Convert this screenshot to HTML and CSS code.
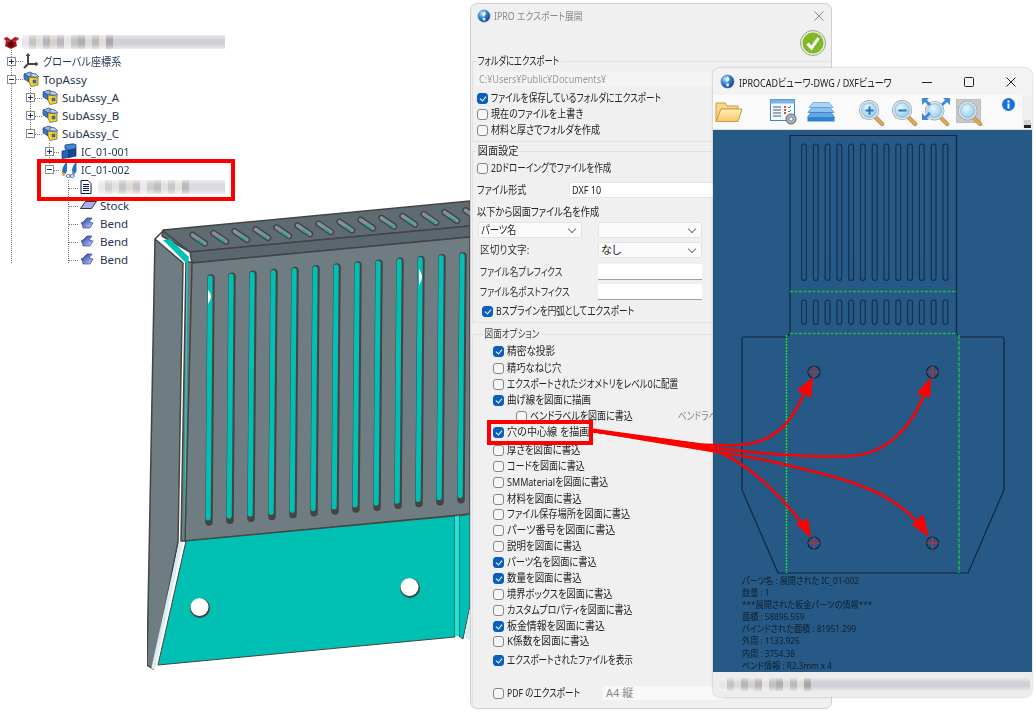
FILE: index.html
```html
<!DOCTYPE html>
<html lang="ja">
<head>
  <meta charset="UTF-8">
  <title>IPRO エクスポート展開</title>
  <link rel="stylesheet" href="styles.css">
</head>
<body>
<svg class="defs" width="0" height="0">
  <defs>
    <radialGradient id="globe" cx="35%" cy="30%" r="75%">
      <stop offset="0" stop-color="#bfe3ff"/><stop offset=".5" stop-color="#2f7fd0"/><stop offset="1" stop-color="#123f86"/>
    </radialGradient>
    <radialGradient id="lens" cx="40%" cy="35%" r="70%">
      <stop offset="0" stop-color="#e6f6ff"/><stop offset="1" stop-color="#8fcbee"/>
    </radialGradient>
    <linearGradient id="bendfill" x1="0" y1="0" x2="1" y2="1">
      <stop offset="0" stop-color="#16309c"/><stop offset="1" stop-color="#c9d4f7"/>
    </linearGradient>
    <linearGradient id="folderfill" x1="0" y1="0" x2="0" y2="1">
      <stop offset="0" stop-color="#fff0bd"/><stop offset="1" stop-color="#f6c865"/>
    </linearGradient>
    <symbol id="i-globe" viewBox="0 0 16 16">
      <circle cx="8" cy="8" r="7" fill="url(#globe)" stroke="#5b7fa8" stroke-width=".6"/>
      <path d="M8 2.500c2 1.200 2.500 2.800 1.600 4.200L7.200 8.800 6 6.200z" fill="#e9f5ff"/>
      <path d="M6 10.500l3-.8.8 3-2.400.8z" fill="#d5ecff"/>
    </symbol>
    <symbol id="i-assy" viewBox="0 0 17 16">
      <path d="M1 3l6-2 5 3-6 2z" fill="#8fb7e6" stroke="#274a7a" stroke-width=".7"/>
      <path d="M1 3l5 3v5L1 8z" fill="#3b78c4" stroke="#274a7a" stroke-width=".7"/>
      <path d="M6 6l9 1v7l-7 1.500L6 11z" fill="#f6d32d" stroke="#5d5a24" stroke-width=".7"/>
      <path d="M8 2l5 1 3 3-8 0z" fill="#bcd2ec" stroke="#274a7a" stroke-width=".7"/>
      <path d="M10 9h3v3h-3z" fill="#3b78c4" stroke="#274a7a" stroke-width=".5"/>
    </symbol>
    <symbol id="i-part" viewBox="0 0 16 16">
      <path d="M1 8l7-1v7.500L1 15.500z" fill="#1f66c4" stroke="#0f2d5e" stroke-width=".7"/>
      <path d="M8 7l7-1.500V13l-7 1.500z" fill="#164a96" stroke="#0f2d5e" stroke-width=".7"/>
      <path d="M4 2l8-1.200 3 1v3.700L8 7 4 6z" fill="#3f8ad8" stroke="#0f2d5e" stroke-width=".7"/>
    </symbol>
    <symbol id="i-sheet" viewBox="0 0 18 17">
      <path d="M1 11C1 7 3 3 6 .5V10L4.500 13z" fill="#2b6fc0"/>
      <path d="M1 11l3.500 2L3 15.500 1 14z" fill="#f0a31e"/>
      <path d="M11 10c0-4 2-7 4.500-9.500V10L14 13z" fill="#2b6fc0"/>
      <path d="M11 10l3 3-1.500 1.500-1.500-2z" fill="#8a8f99"/>
      <ellipse cx="7.500" cy="15" rx="2.400" ry="1.400" fill="none" stroke="#3f74c4" stroke-width=".9"/>
      <ellipse cx="11" cy="15" rx="2.400" ry="1.400" fill="none" stroke="#3f74c4" stroke-width=".9"/>
    </symbol>
    <symbol id="i-doc" viewBox="0 0 12 14">
      <path d="M1 .5h7l3 3v10H1z" fill="#fff" stroke="#0a1560"/>
      <path d="M3 4.500h6M3 6.500h6M3 8.500h6M3 10.500h6" stroke="#0a1560"/>
    </symbol>
    <symbol id="i-bend" viewBox="0 0 14 12">
      <path d="M1 6l2-1 4-4h5l-3 4 4 1-3 5H3C3 9 2 7 1 6z" fill="url(#bendfill)" stroke="#18308e" stroke-width=".6"/>
    </symbol>
    <symbol id="i-mag" viewBox="0 0 28 28">
      <path d="M17 18l8 8" stroke="#8c8c8c" stroke-width="4.400" stroke-linecap="round"/>
      <path d="M17 18l8 8" stroke="#f2a33a" stroke-width="3" stroke-linecap="round"/>
      <circle cx="11.500" cy="11.500" r="10.500" fill="#8f9ea9"/>
      <circle cx="11.500" cy="11.500" r="9.800" fill="#dbe4ea"/>
      <circle cx="11.500" cy="11.500" r="7.600" fill="url(#lens)" stroke="#7fa2ba" stroke-width=".6"/>
    </symbol>
    <g id="sheet-long"><rect x="801.600" y="144" width="4.800" height="136.500" rx="2.400" fill="none" stroke="#14304d" stroke-width="1.200"/></g>
    <g id="sheet-short"><rect x="801.600" y="300" width="4.800" height="24.500" rx="2.400" fill="none" stroke="#14304d" stroke-width="1.200"/></g>
  </defs>
</svg>

<div class="desk">

  <!-- MODEL TREE -->
  <section class="tree">
    <svg class="tree-guides" width="240" height="270">
      <path d="M11.500 50V263M30.500 88V135M49.500 143V170M68.500 180V263M16 61.500H23M16 79.500H23M35 98.500H42M35 116.500H42M35 134.500H42M54 152.500H60M54 170.500H60M69 188.500H79M69 206.500H79M69 224.500H79M69 242.500H79M69 260.500H79" stroke="#777" stroke-dasharray="1 1" fill="none"/>
    </svg>
    <div class="tree-row root">
      <svg class="tree-icon" width="17" height="15" viewBox="0 0 17 15"><path d="M1 3l3-1 4 3 4-3 4 1-3 3 1 5-6 3-6-3 1-5z" fill="#a8141c"/><path d="M5 7l3-1.500L11 7v4l-3 1.500L5 11z" fill="#5c0a10"/><path d="M1 4l6 3M16 4l-6 3" stroke="#f03a3a"/></svg>
      <span class="mosaic mosaic-root"></span>
    </div>
    <div class="tree-row d0"><span class="exp plus"></span><svg class="tree-icon" width="16" height="16" viewBox="0 0 16 16"><path d="M5 1v10h9M5 11l-4 4" fill="none" stroke="#444" stroke-width="2"/><path d="M5 0l2.500 3h-5zM15.500 11l-3 2.500v-5z" fill="#444"/></svg><span class="tree-label s88">グローバル座標系</span></div>
    <div class="tree-row d0"><span class="exp minus"></span><svg class="tree-icon" width="17" height="16"><use href="#i-assy"/></svg><span class="tree-label">TopAssy</span></div>
    <div class="tree-row d1"><span class="exp plus"></span><svg class="tree-icon" width="17" height="16"><use href="#i-assy"/></svg><span class="tree-label">SubAssy_A</span></div>
    <div class="tree-row d1"><span class="exp plus"></span><svg class="tree-icon" width="17" height="16"><use href="#i-assy"/></svg><span class="tree-label">SubAssy_B</span></div>
    <div class="tree-row d1"><span class="exp minus"></span><svg class="tree-icon" width="17" height="16"><use href="#i-assy"/></svg><span class="tree-label">SubAssy_C</span></div>
    <div class="tree-row d2"><span class="exp plus"></span><svg class="tree-icon" width="16" height="16"><use href="#i-part"/></svg><span class="tree-label s92">IC_01-001</span></div>
    <div class="tree-row d2"><span class="exp minus"></span><svg class="tree-icon" width="18" height="17"><use href="#i-sheet"/></svg><span class="tree-label s92">IC_01-002</span></div>
    <div class="tree-row d3"><span class="exp none"></span><svg class="tree-icon" width="12" height="14"><use href="#i-doc"/></svg><span class="mosaic mosaic-doc"></span></div>
    <div class="tree-row d3"><span class="exp none"></span><svg class="tree-icon" width="17" height="8" viewBox="0 0 17 8"><path d="M.5 7.500l5-7H16.500l-5 7z" fill="#a9b0ee" stroke="#333"/></svg><span class="tree-label">Stock</span></div>
    <div class="tree-row d3"><span class="exp none"></span><svg class="tree-icon" width="14" height="12"><use href="#i-bend"/></svg><span class="tree-label">Bend</span></div>
    <div class="tree-row d3"><span class="exp none"></span><svg class="tree-icon" width="14" height="12"><use href="#i-bend"/></svg><span class="tree-label">Bend</span></div>
    <div class="tree-row d3"><span class="exp none"></span><svg class="tree-icon" width="14" height="12"><use href="#i-bend"/></svg><span class="tree-label">Bend</span></div>
  </section>

  <!-- 3D PART -->
  <svg class="part" width="323" height="480" viewBox="147 195 323 480">
    <defs>
      <g id="topslot">
        <path d="M192.500 235L205 243.500" stroke="#444" stroke-width="6.500" stroke-linecap="round"/>
        <path d="M192.500 235L205 243.500" stroke="#84919a" stroke-width="3.600" stroke-linecap="round"/>
        <path d="M197 239.500L204 244" stroke="#19a79c" stroke-width="1.500"/>
      </g>
      <g id="longslot">
        <path d="M211 278L209 522" stroke="#444" stroke-width="7.500" stroke-linecap="round"/>
        <path d="M210.200 278L208.200 518" stroke="#00bfb3" stroke-width="5" stroke-linecap="round"/>
      </g>
    </defs>
    <!-- top flange -->
    <path d="M163 230L470 201V226L190 252L162 236Z" fill="#5e6b72" stroke="#444" stroke-width="1.500" stroke-linejoin="round"/>
    <path d="M190 252L470 226V237L192 263Z" fill="#5a676e" stroke="#444" stroke-width="1.500"/>
    <use href="#topslot"/><use href="#topslot" transform="translate(21 -1.900)"/><use href="#topslot" transform="translate(42 -3.800)"/><use href="#topslot" transform="translate(63 -5.700)"/><use href="#topslot" transform="translate(84 -7.600)"/><use href="#topslot" transform="translate(105 -9.500)"/><use href="#topslot" transform="translate(126 -11.400)"/><use href="#topslot" transform="translate(147 -13.300)"/><use href="#topslot" transform="translate(168 -15.200)"/><use href="#topslot" transform="translate(189 -17.100)"/><use href="#topslot" transform="translate(210 -19)"/><use href="#topslot" transform="translate(231 -20.900)"/><use href="#topslot" transform="translate(252 -22.800)"/><use href="#topslot" transform="translate(273 -24.700)"/>
    <!-- teal under the flange, left panel -->
    <path d="M186 262H193L186 541H181Z" fill="#6f7c82" stroke="#444" stroke-width="1.500"/>
    <path d="M187 262L185 540" stroke="#14d8c8" stroke-width="1.200"/>
    <path d="M155 239L183 263L178 542L153 669L147 665Z" fill="#6f7c82" stroke="#444" stroke-width="1.500" stroke-linejoin="round"/>
    <path d="M163 240L170 239L189 257L188 265Z" fill="#00bfb3"/>
    <path d="M155 239L163 231L190 252" fill="none" stroke="#444" stroke-width="1.500"/>
    <!-- front face -->
    <path d="M192 263L470 237V514L185 541Z" fill="#6f7c82" stroke="#444" stroke-width="1.500"/>
    <use href="#longslot"/><use href="#longslot" transform="translate(21 -1.850)"/><use href="#longslot" transform="translate(42 -3.700)"/><use href="#longslot" transform="translate(63 -5.550)"/><use href="#longslot" transform="translate(84 -7.400)"/><use href="#longslot" transform="translate(105 -9.250)"/><use href="#longslot" transform="translate(126 -11.100)"/><use href="#longslot" transform="translate(147 -12.950)"/><use href="#longslot" transform="translate(168 -14.800)"/><use href="#longslot" transform="translate(189 -16.650)"/><use href="#longslot" transform="translate(210 -18.500)"/><use href="#longslot" transform="translate(231 -20.350)"/><use href="#longslot" transform="translate(252 -22.200)"/>
    <path d="M208 290Q214 296 208 304Z" fill="#fff"/><path d="M419 269Q425 277 419 285Z" fill="#fff"/>
    <!-- lower teal panel -->
    <path d="M186 541L455 516V637L158 665Z" fill="#00bfb3" stroke="#444" stroke-width="1"/>
    <path d="M181 542L153 669" stroke="#dbecf2" stroke-width="3.500"/>
    <path d="M459 516L470 514V606L463 639L459 636Z" fill="#00bfb3" stroke="#444" stroke-width="1"/>
    <path d="M457 516V636" stroke="#1ee6d4" stroke-width="4"/>
    <path d="M470 608L464 638L470 640Z" fill="#dbecf2"/>
    <circle cx="200" cy="608" r="10" fill="#444"/><circle cx="199.500" cy="607" r="9" fill="#fff"/>
    <circle cx="410" cy="588" r="10" fill="#444"/><circle cx="409.500" cy="587" r="9" fill="#fff"/>
  </svg>

  <!-- EXPORT DIALOG -->
  <section class="dialog">
    <header class="dialog-title">
      <svg class="app-icon" width="14" height="14"><use href="#i-globe"/></svg>
      <span class="dialog-name s84">IPRO エクスポート展開</span>
      <svg class="dialog-close" width="10" height="10" viewBox="0 0 10 10"><path d="M.5.500l9 9M9.500.500l-9 9" stroke="#8a8a8a"/></svg>
    </header>
    <div class="done-row">
      <svg width="26" height="26" viewBox="0 0 26 26">
        <circle cx="13" cy="13" r="12.500" fill="#eaf2d8" stroke="#9aa58a"/>
        <circle cx="13" cy="13" r="10.500" fill="#7fb928"/>
        <path d="M7.500 13.500l4 4.500 7-10" fill="none" stroke="#fff" stroke-width="3"/>
      </svg>
    </div>

    <div class="group">
      <div class="legend s75">フォルダにエクスポート</div>
      <div class="path-box"><span class="txt s86">C:¥Users¥Public¥Documents¥</span></div>
      <label class="check-row first"><span class="check on"></span><span class="txt s78">ファイルを保存しているフォルダにエクスポート</span></label>
      <label class="check-row"><span class="check"></span><span class="txt s82">現在のファイルを上書き</span></label>
      <label class="check-row"><span class="check"></span><span class="txt s82">材料と厚さでフォルダを作成</span></label>
    </div>

    <div class="group group-drawing">
      <div class="legend s92">図面設定</div>
      <label class="check-row tight"><span class="check"></span><span class="txt s78">2Dドローイングでファイルを作成</span></label>
      <div class="form-row format-row"><span class="format-label txt s82">ファイル形式</span><div class="field field-wide"><span class="txt s82">DXF 10</span></div></div>
      <div class="form-row name-title"><span class="txt s84">以下から図面ファイル名を作成</span></div>
      <div class="form-row select-row">
        <div class="field select first-select"><span class="txt s84">パーツ名</span></div>
        <div class="field select"></div>
      </div>
      <div class="form-row named sep-row"><span class="name-label txt s88">区切り文字:</span><div class="field select">なし</div></div>
      <div class="form-row named prefix-row"><span class="name-label txt s78">ファイル名プレフィクス</span><div class="field plain"></div></div>
      <div class="form-row named postfix-row"><span class="name-label txt s78">ファイル名ポストフィクス</span><div class="field plain"></div></div>
      <label class="check-row spline"><span class="check on"></span><span class="txt s78">Bスプラインを円弧としてエクスポート</span></label>
    </div>

    <div class="group group-options">
      <div class="legend legend-options s78">図面オプション</div>
      <label class="opt tight"><span class="check on"></span><span class="txt s88">精密な投影</span></label>
      <label class="opt step17"><span class="check"></span><span class="txt s84">精巧なねじ穴</span></label>
      <label class="opt"><span class="check"></span><span class="txt s78">エクスポートされたジオメトリをレベル0に配置</span></label>
      <label class="opt"><span class="check on"></span><span class="txt s86">曲げ線を図面に描画</span></label>
      <label class="opt sub"><span class="check"></span><span class="txt s82 sub-text">ベンドラベルを図面に書込</span><span class="bend-hint txt s78">ベンドラベル</span></label>
      <label class="opt"><span class="check on"></span><span class="txt s92">穴の中心線 を描画</span></label>
      <label class="opt step18"><span class="check"></span><span class="txt s86">厚さを図面に書込</span></label>
      <label class="opt"><span class="check"></span><span class="txt s82">コードを図面に書込</span></label>
      <label class="opt"><span class="check"></span><span class="txt s82">SMMaterialを図面に書込</span></label>
      <label class="opt step17"><span class="check"></span><span class="txt s86">材料を図面に書込</span></label>
      <label class="opt step15"><span class="check"></span><span class="txt s84">ファイル保存場所を図面に書込</span></label>
      <label class="opt"><span class="check"></span><span class="txt s92">パーツ番号を図面に書込</span></label>
      <label class="opt"><span class="check"></span><span class="txt s86">説明を図面に書込</span></label>
      <label class="opt"><span class="check on"></span><span class="txt s84">パーツ名を図面に書込</span></label>
      <label class="opt"><span class="check on"></span><span class="txt s86">数量を図面に書込</span></label>
      <label class="opt"><span class="check"></span><span class="txt s84">境界ボックスを図面に書込</span></label>
      <label class="opt"><span class="check"></span><span class="txt s82">カスタムプロパティを図面に書込</span></label>
      <label class="opt"><span class="check on"></span><span class="txt s90">板金情報を図面に書込</span></label>
      <label class="opt step15"><span class="check"></span><span class="txt s88">K係数を図面に書込</span></label>
      <label class="opt step19"><span class="check on"></span><span class="txt s78">エクスポートされたファイルを表示</span></label>
      <div class="opt pdf-row"><span class="check"></span><span class="txt s78 pdf-text">PDF のエクスポート</span><span class="paper">A4 縦</span></div>
    </div>
  </section>

  <!-- DXF VIEWER -->
  <section class="viewer">
    <header class="viewer-title">
      <svg class="app-icon" width="15" height="15"><use href="#i-globe"/></svg>
      <span class="viewer-name s78">IPROCADビューワ-DWG / DXFビューワ</span>
      <div class="win-buttons">
        <svg width="10" height="10" viewBox="0 0 10 10"><path d="M0 5.500h10" stroke="#222"/></svg>
        <svg width="10" height="10" viewBox="0 0 10 10"><rect x=".5" y=".5" width="9" height="9" rx="1" fill="none" stroke="#222"/></svg>
        <svg width="10" height="10" viewBox="0 0 10 10"><path d="M.5.500l9 9M9.500.500l-9 9" stroke="#222"/></svg>
      </div>
    </header>
    <div class="toolbar">
      <svg class="tool-folder" width="28" height="22" viewBox="0 0 28 22"><path d="M1 20V2h9l2 3h11v3H6z" fill="#f8d98a" stroke="#c99b45"/><path d="M1 20.500L6 8h21l-4 12.500z" fill="url(#folderfill)" stroke="#c99b45"/></svg>
      <svg class="tool-props" width="28" height="27" viewBox="0 0 28 27"><rect x=".5" y=".5" width="24" height="21" fill="#f6f9fd" stroke="#3a83c8"/><rect x=".5" y=".5" width="24" height="4" fill="#7fb4e4"/><path d="M3 8h8M3 11h8M3 14h8M3 17h8" stroke="#7d8da0" stroke-width="1.500"/><path d="M14 8h2M14 11h2M14 14h2" stroke="#d9473f" stroke-width="2"/><path d="M18 8l1 1 2-2M18 12l1 1 2-2" stroke="#3ca04a" fill="none"/><circle cx="21" cy="20" r="5" fill="#aab3bb" stroke="#5d666e"/><circle cx="21" cy="20" r="2" fill="#fff" stroke="#5d666e" stroke-width=".7"/></svg>
      <svg class="tool-layers" width="28" height="21" viewBox="0 0 28 21"><path d="M6 .500h16l4 5H2z" fill="#a9d4f5" stroke="#7fb2dc"/><path d="M5 5.500h18l4 5H1z" fill="#8cc3ee" stroke="#5d9dd2"/><path d="M4 10.500h20l3.500 5H.5z" fill="#62a8e4" stroke="#3d86c6"/><path d="M.5 15.500h27v4H.5z" fill="#2f82cc"/></svg>
      <svg class="tool-mag tool-in" width="27" height="27"><use href="#i-mag"/><path d="M7.500 11.500h8M11.500 7.500v8" stroke="#2f6fb4" stroke-width="2"/></svg>
      <svg class="tool-mag tool-out" width="27" height="27"><use href="#i-mag"/><path d="M7.500 11.500h8" stroke="#2f6fb4" stroke-width="2"/></svg>
      <svg class="tool-mag tool-fit" width="28" height="28" viewBox="0 0 28 28"><use href="#i-mag" x="2" y="2" width="26" height="26"/><path d="M0 7V0h7l-2 2 4 4-2 2-4-4zM28 7V0h-7l2 2-4 4 2 2 4-4zM0 15v7h7l-2-2 4-4-2-2-4 4z" fill="#3f8ad4"/></svg>
      <svg class="tool-mag tool-win" width="27" height="27" viewBox="0 0 27 27"><rect x=".5" y=".5" width="24" height="23" fill="#c9c9c9" stroke="#9a9a9a" stroke-dasharray="1 1"/><use href="#i-mag" x="1" y="1" width="26" height="26"/></svg>
      <svg class="tool-info" width="13" height="13" viewBox="0 0 13 13"><circle cx="6.500" cy="6.500" r="6.500" fill="#1573e0"/><rect x="5.500" y="5.500" width="2" height="5" fill="#fff"/><rect x="5.500" y="2.500" width="2" height="2" fill="#fff"/></svg>
      <div class="toolbar-strip"><span class="strip-btn"></span></div>
    </div>
    <div class="sheet">
      <svg class="sheet-draw" width="319" height="542" viewBox="713 130 319 542">
        <use href="#sheet-long"/><use href="#sheet-long" x="11.780"/><use href="#sheet-long" x="23.560"/><use href="#sheet-long" x="35.340"/><use href="#sheet-long" x="47.120"/><use href="#sheet-long" x="58.900"/><use href="#sheet-long" x="70.680"/><use href="#sheet-long" x="82.460"/><use href="#sheet-long" x="94.240"/><use href="#sheet-long" x="106.020"/><use href="#sheet-long" x="117.800"/><use href="#sheet-long" x="129.580"/><use href="#sheet-long" x="141.360"/>
        <use href="#sheet-short"/><use href="#sheet-short" x="11.780"/><use href="#sheet-short" x="23.560"/><use href="#sheet-short" x="35.340"/><use href="#sheet-short" x="47.120"/><use href="#sheet-short" x="58.900"/><use href="#sheet-short" x="70.680"/><use href="#sheet-short" x="82.460"/><use href="#sheet-short" x="94.240"/><use href="#sheet-short" x="106.020"/><use href="#sheet-short" x="117.800"/><use href="#sheet-short" x="129.580"/><use href="#sheet-short" x="141.360"/>
        <path d="M790 334V135.500H956.500V334M790 334L786 337H744Q742 337 742 339V490L778 573H968L1004 490V339Q1004 337 1002 337H960L956.500 334" fill="none" stroke="#10263d" stroke-width="1.200"/>
        <path d="M790 291.500H957M790 333.500H957" stroke="#1eb93e" stroke-width="1.500" stroke-dasharray="3 1.500"/>
        <path d="M786.500 335V573" stroke="#19e02e" stroke-width="1.500" stroke-dasharray="2 1"/>
        <path d="M959 335V573" stroke="#1eb93e" stroke-width="1.500" stroke-dasharray="4 1.500"/>
        <g fill="none" stroke="#10263d" stroke-width="1.200"><circle cx="814" cy="372" r="6"/><circle cx="932.500" cy="372" r="6"/><circle cx="814" cy="543" r="6"/><circle cx="932.500" cy="543" r="6"/></g>
        <g stroke="#e0252e" stroke-width="1"><path d="M808 372h12M814 366v12M926.500 372h12M932.500 366v12M808 543h12M814 537v12M926.500 543h12M932.500 537v12"/></g>
      </svg>
      <div class="sheet-notes s86">
        <div>パーツ名 : 展開された IC_01-002</div>
        <div>数量 : 1</div>
        <div>***展開された板金パーツの情報***</div>
        <div>面積 : 58896.559</div>
        <div>バインドされた面積 : 81951.299</div>
        <div>外周 : 1133.926</div>
        <div>内周 : 3754.38</div>
        <div>ベンド情報 : R2.3mm x 4</div>
      </div>
    </div>
    <div class="viewer-status"><span class="mosaic mosaic-status"></span></div>
  </section>

  <!-- RED CALLOUTS -->
  <svg class="callouts" width="1036" height="712" viewBox="0 0 1036 712">
    <rect x="39" y="161" width="194" height="38" fill="none" stroke="#f00" stroke-width="4"/>
    <rect x="489" y="422" width="102" height="21" fill="none" stroke="#f00" stroke-width="4"/>
    <g fill="none" stroke="#f00" stroke-width="2.500">
      <path d="M593 431L700 444.500C745 447 765 445 785 425C793 416 799 405 804 393"/>
      <path d="M593 431L700 446C760 454 810 458 850 456C885 454 910 430 924 395"/>
      <path d="M593 431L710 449C745 460 775 490 802 523"/>
      <path d="M593 431L760 459C830 475 885 485 917 522"/>
      <path d="M593 430.500L705 446" stroke-width="4"/>
    </g>
    <path d="M813 377L811 398L797 390Z" fill="#f00"/>
    <path d="M931 377L930 398L917 393Z" fill="#f00"/>
    <path d="M811 538L796 524L808 518Z" fill="#f00"/>
    <path d="M929 537L912 525L923 514Z" fill="#f00"/>
  </svg>
</div>
</body>
</html>
```

FILE: styles.css
```css
/* General Reset */
* {
  margin: 0;
  padding: 0;
  box-sizing: border-box;
}
body {
  background: #fff;
  font-family: "Noto Sans", "Noto Sans CJK JP", sans-serif;
  font-feature-settings: "palt";
  color: #222;
  overflow: hidden;
}
.defs {
  position: absolute;
}
.desk {
  position: relative;
  width: 1036px;
  height: 712px;
  overflow: hidden;
}

/* condensed UI text, the width stays in the flow */
.txt {
  display: inline-block;
}
.s75, .s78, .s82, .s84, .s86, .s88, .s90, .s92 {
  transform-origin: left center;
}
.s75 { transform: scaleX(0.75); }
.s78 { transform: scaleX(0.78); }
.s82 { transform: scaleX(0.82); }
.s84 { transform: scaleX(0.84); }
.s86 { transform: scaleX(0.86); }
.s88 { transform: scaleX(0.88); }
.s90 { transform: scaleX(0.9); }
.s92 { transform: scaleX(0.92); }

/* ===== MOSAIC (hidden names) ===== */
.mosaic {
  display: block;
  height: 14px;
  filter: blur(0.7px);
  background-image:
    linear-gradient(180deg, rgba(255,255,255,0.55), rgba(255,255,255,0) 35%, rgba(255,255,255,0) 65%, rgba(255,255,255,0.6)),
    linear-gradient(90deg, #e6e6ea 0 7px, #c4c4c0 7px 14px, #dcdcdc 14px 21px, #b4b6ba 21px 28px, #d4d2c8 28px 35px, #bcb4bc 35px 42px, #e4e4e4 42px 49px, #c2c2c6 49px 56px, #aeb0ac 56px 63px, #dadade 63px 70px, #bebaba 70px 77px, #e2dcd8 77px 84px, #a8a8ac 84px 91px, #d0d0d6 91px 98px);
}
.mosaic-root {
  width: 203px;
}
.mosaic-doc {
  width: 127px;
  opacity: 0.8;
}
.mosaic-status {
  width: 310px;
  height: 13px;
}

/* ===== MODEL TREE ===== */
.tree {
  position: absolute;
  left: 0;
  top: 33px;
  width: 240px;
  font-size: 11.500px;
  color: #1f3550;
}
.tree-guides {
  position: absolute;
  left: 0;
  top: -33px;
}
.tree-row {
  position: relative;
  display: flex;
  align-items: center;
  height: 18px;
  padding-left: 2px;
}
.tree-row.root {
  padding-left: 1px;
  margin-bottom: 1px;
  gap: 2px;
}
.d1 { padding-left: 21px; }
.d2 { padding-left: 40px; }
.d3 { padding-left: 59px; }
.exp {
  position: relative;
  width: 9px;
  height: 9px;
  margin: 0 5px;
  background: #fff;
  border: 1px solid #8b8b8b;
  flex: none;
}
.exp.none {
  border: none;
  background: none;
}
.exp.plus::before,
.exp.minus::before {
  content: '';
  position: absolute;
  left: 1px;
  top: 3px;
  width: 5px;
  height: 1px;
  background: #1c2f6b;
}
.exp.plus::after {
  content: '';
  position: absolute;
  left: 3px;
  top: 1px;
  width: 1px;
  height: 5px;
  background: #1c2f6b;
}
.tree-icon {
  flex: none;
  margin-left: 2px;
}
.tree-label {
  position: absolute;
  left: 43px;
  white-space: nowrap;
}
.d1 .tree-label { left: 62px; }
.d2 .tree-label { left: 81px; }
.d3 .tree-label { left: 100px; }
.d3 .mosaic {
  position: absolute;
  left: 98px;
}

/* ===== 3D PART ===== */
.part {
  position: absolute;
  left: 147px;
  top: 195px;
}

/* ===== EXPORT DIALOG ===== */
.dialog {
  position: absolute;
  left: 470px;
  top: 3px;
  width: 362px;
  height: 706px;
  display: flex;
  flex-direction: column;
  background: #f0f0f0;
  border: 1px solid #cfcfcf;
  border-radius: 7px;
  font-size: 11px;
  line-height: 16px;
  white-space: nowrap;
}
.dialog-title {
  display: flex;
  align-items: center;
  height: 24px;
  padding: 0 7px 0 6px;
  gap: 3px;
}
.dialog-name {
  color: #8a8a8a;
  font-size: 10.500px;
}
.dialog-close {
  margin-left: auto;
}
.done-row {
  display: flex;
  justify-content: flex-end;
  align-items: center;
  height: 33px;
  padding: 0 5px 4px 0;
}
.group {
  border: 1px solid #e2e2e2;
  border-right: none;
  margin-left: 1px;
  padding: 0 0 3px 4px;
}
.group-drawing { margin-top: 9px; }
.group-options {
  margin-top: 11px;
  flex: 1;
  border-bottom: none;
}
.legend {
  width: fit-content;
  height: 14px;
  line-height: 14px;
  margin: -8px 0 0 -1px;
  padding: 0 2px;
  background: #f0f0f0;
}
.legend-options {
  margin-left: 6px;
  color: #444;
}
.path-box {
  height: 14px;
  line-height: 14px;
  margin: 4px 0 0 -1px;
  padding-left: 3px;
  background: #f4f4f4;
  color: #999;
  font-size: 10.500px;
}
.check-row,
.opt {
  display: flex;
  align-items: center;
  height: 16px;
}
.check {
  position: relative;
  width: 11px;
  height: 11px;
  margin-right: 3px;
  background: #f6f6f6;
  border: 1px solid #858585;
  border-radius: 3px;
  flex: none;
}
.check.on {
  background: #0a5fbd;
  border-color: #0a5fbd;
}
.check.on::after {
  content: '';
  position: absolute;
  left: 2.500px;
  top: 1px;
  width: 3px;
  height: 5px;
  border: solid #fff;
  border-width: 0 1px 1px 0;
  transform: rotate(40deg);
}
.check-row.first { margin-top: 4px; }
.check-row.tight { margin-top: 2px; }
.check-row.spline {
  margin-top: 3px;
  padding-left: 5px;
}
.form-row {
  display: flex;
  align-items: center;
  height: 16px;
}
.format-row { margin-top: 6px; }
.format-label { width: 92px; }
.name-title { margin-top: 6px; }
.select-row {
  margin-top: 2px;
  padding-left: 1px;
}
.first-select { margin-right: 16px; }
.named { padding-left: 3px; }
.name-label { width: 118px; color: #333; }
.sep-row { margin-top: 4px; }
.prefix-row { margin-top: 6px; }
.postfix-row { margin-top: 4px; }
.field {
  position: relative;
  height: 16px;
  background: #fbfbfb;
  border: 1px solid #e4e4e4;
  border-radius: 2px;
  padding-left: 2px;
  line-height: 14px;
}
.field-wide {
  width: 160px;
  background: #fff;
}
.select { width: 104px; }
.select::after {
  content: '';
  position: absolute;
  right: 6px;
  top: 3px;
  width: 5px;
  height: 5px;
  border: solid #777;
  border-width: 0 1px 1px 0;
  transform: rotate(45deg);
}
.plain {
  width: 104px;
  background: #fff;
  border: none;
  border-bottom: 1px solid #a0a0a0;
  border-radius: 0;
}
.opt { padding-left: 16px; }
.opt.tight { margin-top: 2px; }
.opt.sub { padding-left: 39px; }
.opt.step15 { margin-top: -1px; }
.opt.step17 { margin-top: 1px; }
.opt.step18 { margin-top: 2px; }
.opt.step19 { margin-top: 3px; }
.sub-text { width: 148px; }
.bend-hint { color: #888; }
.pdf-row { margin-top: 17px; }
.pdf-text { width: 96px; }
.paper {
  width: 120px;
  height: 14px;
  line-height: 14px;
  padding-left: 3px;
  background: #f8f8f8;
  color: #888;
}

/* ===== DXF VIEWER ===== */
.viewer {
  position: absolute;
  left: 713px;
  top: 68px;
  width: 319px;
  height: 629px;
  display: flex;
  flex-direction: column;
  background: #f1f1f1;
  border-radius: 7px;
  overflow: hidden;
  box-shadow: 0 0 2px rgba(0,0,0,0.35);
}
.viewer-title {
  display: flex;
  align-items: center;
  height: 27px;
  padding-left: 7px;
  gap: 4px;
  background: #f3f3f3;
}
.app-icon {
  flex: none;
}
.viewer-name {
  flex: 0 0 170px;
  min-width: 0;
  font-size: 11.500px;
  color: #222;
  white-space: nowrap;
}
.win-buttons {
  display: flex;
  gap: 32px;
  margin-left: auto;
  padding-right: 16px;
}
.win-buttons svg {
  flex: none;
}
.toolbar {
  position: relative;
  display: flex;
  align-items: center;
  height: 35px;
  padding-right: 10px;
  background: #fafafa;
  border-bottom: 1px solid #ddd;
}
.toolbar svg { flex: none; }
.tool-folder { margin-left: 2px; }
.tool-props { margin-left: 27px; }
.tool-layers { margin-left: 9px; }
.tool-in { margin-left: 23px; }
.tool-out { margin-left: 6px; }
.tool-fit { margin-left: 4px; }
.tool-win { margin-left: 6px; }
.tool-info { margin: -15px 0 0 19px; }
.toolbar-strip {
  position: absolute;
  right: 0;
  top: 0;
  width: 10px;
  height: 100%;
  background: #f0f0f0;
}
.strip-btn {
  position: absolute;
  left: 2px;
  bottom: 1px;
  width: 7px;
  height: 8px;
  background: #d4d4d4;
  border-bottom: 3px solid #222;
}
.sheet {
  position: relative;
  flex: 1;
  background: #265985;
}
.sheet-draw {
  display: block;
}
.sheet-notes {
  position: absolute;
  left: 29px;
  top: 445px;
  font-size: 9.500px;
  line-height: 12.100px;
  color: #10202f;
  white-space: nowrap;
}
.viewer-status {
  height: 25px;
  padding: 6px 0 0 7px;
  background: #ededed;
}

/* ===== RED CALLOUTS ===== */
.callouts {
  position: absolute;
  left: 0;
  top: 0;
  pointer-events: none;
}
```
